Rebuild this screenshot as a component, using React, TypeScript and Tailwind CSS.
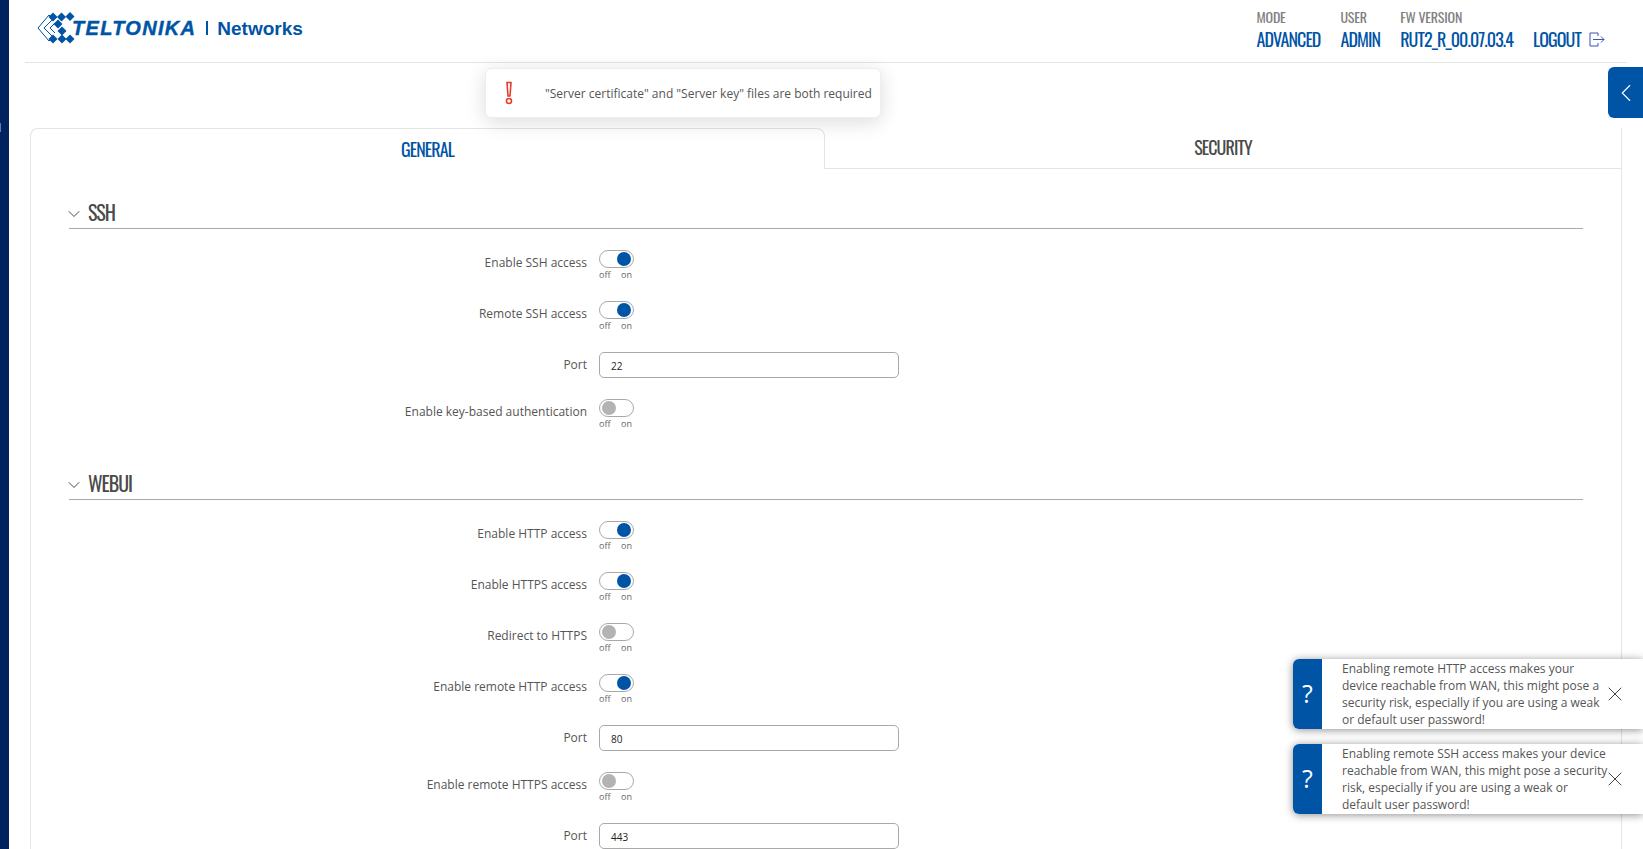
import { X, ChevronDown, ChevronLeft } from 'lucide-react';

const condensed = "font-['Oswald','Liberation_Sans_Narrow','Liberation_Sans',sans-serif]";

function Toggle({ on }: { on?: boolean }) {
  return (
    <div className="w-[35px] h-[30px]">
      <div className="h-[18px] w-[35px] rounded-full border border-[#a9a9a9] bg-white relative">
        <span
          className={
            on
              ? 'absolute right-[2px] top-[1px] size-[14px] rounded-full bg-[#0054a6]'
              : 'absolute left-[2px] top-[1px] size-[14px] rounded-full bg-[#b3b3b3]'
          }
        />
      </div>
      <div className="flex justify-between text-[9px] leading-[13px] text-[#666]">
        <span>off</span>
        <span className="mr-[2px]">on</span>
      </div>
    </div>
  );
}

function Row({ label, on, value }: { label: string; on?: boolean; value?: string }) {
  const isInput = value !== undefined;
  return (
    <div className="flex items-start gap-3 mb-[21px]">
      <div className="w-[518px] text-right text-[12px] leading-[18px] text-[#555] pt-[4px]">{label}</div>
      {isInput ? (
        <div className="w-[300px] h-[26px] rounded-[5px] border border-[#a9a9a9] pl-[11px] text-[10px] leading-[26px] text-[#222]">{value}</div>
      ) : (
        <Toggle on={on} />
      )}
    </div>
  );
}

function Section({ title, children }: { title: string; children: React.ReactNode }) {
  return (
    <section>
      <div className="flex items-center h-[34px] border-b border-[#a9a9a9] text-[#4a4a4a]">
        <ChevronDown size={20} strokeWidth={1.2} className="-ml-[5px] mr-[4px] mt-[5px]" />
        <span className={`${condensed} text-[20px] leading-[30px] tracking-[-1px]`}>{title}</span>
      </div>
      <div className="pt-[21px]">{children}</div>
    </section>
  );
}

function Logo() {
  return (
    <div className="flex items-center">
      <svg width="38" height="32" viewBox="0 0 38 32" className="shrink-0">
        <g fill="none" stroke="#0054a6" strokeWidth="1">
          <path d="M12 3 L1 16 L12 29" />
          <path d="M16 7 L7 16 L16 25" />
          <path d="M12 3 L16 7 M12 29 L16 25" />
          <path d="M18 11 L13 16 L18 21" />
        </g>
        <g fill="#0054a6">
          <path d="M11.500 5 L16 0.500 L20.500 5 L16 9.500Z" />
          <path d="M20 5 L24.500 0.500 L29 5 L24.500 9.500Z" />
          <path d="M28.500 4.500 L33 0 L37.500 4.500 L33 9Z" />
          <path d="M16.500 12 L21 7.500 L25.500 12 L21 16.500Z" />
          <path d="M20.500 19 L25 14.500 L29.500 19 L25 23.500Z" />
          <path d="M11.500 27 L16 22.500 L20.500 27 L16 31.500Z" />
          <path d="M20.500 27 L25 22.500 L29.500 27 L25 31.500Z" />
          <path d="M28.500 27 L33 22.500 L37.500 27 L33 31.500Z" />
        </g>
      </svg>
      <span className="font-['Liberation_Sans',sans-serif] italic font-bold text-[20px] leading-none text-[#0054a6] -ml-[3px] tracking-[1.3px] [-webkit-text-stroke:0.4px_#0054a6]">TELTONIKA</span>
      <span className="w-[2px] h-[14px] bg-[#0054a6] ml-[10px] mr-[9px]" />
      <span className="font-['Liberation_Sans',sans-serif] font-bold text-[19px] leading-none text-[#0054a6]">Networks</span>
    </div>
  );
}

function HeaderItem({ label, value }: { label: string; value: string }) {
  return (
    <div className={`${condensed} flex flex-col`}>
      <span className="text-[14px] leading-[18px] text-[#808080] tracking-[-0.2px]">{label}</span>
      <span className="text-[18px] leading-[26px] text-[#0054a6] tracking-[-0.9px]">{value}</span>
    </div>
  );
}

function Notice({ text, top }: { text: string; top: string }) {
  return (
    <div className={`absolute right-0 ${top} w-[350px] h-[70px] flex bg-white shadow-[0_1px_9px_rgba(0,0,0,0.45)] rounded-l-[6px]`}>
      <div className="w-[29px] shrink-0 bg-[#0054a6] rounded-l-[6px] flex items-center justify-center text-white text-[25px]">?</div>
      <p className="w-[268px] ml-[20px] pt-[1px] text-[12px] leading-[17px] text-[#555] shrink-0">{text}</p>
      <X size={24} strokeWidth={1} className="text-[#444] -ml-[7px] mt-[23px] shrink-0" />
    </div>
  );
}

export default function App() {
  return (
    <div className="relative h-[849px] overflow-hidden bg-white font-['Open_Sans',sans-serif] flex">
      <div className="w-[9px] shrink-0 bg-[#00235f]" />
      <span className="absolute left-0 top-[123px] w-[1px] h-[9px] bg-[#5f7fa8]" />
      <main className="flex-1 min-w-0 pl-[16px] pr-[16px]">
        <header className="h-[63px] border-b border-[#e4e4e4] flex items-start justify-between pl-[12px]">
          <div className="pt-[12px]"><Logo /></div>
          <div className="flex gap-[20px] pt-[8px] pr-[22px]">
            <HeaderItem label="MODE" value="ADVANCED" />
            <HeaderItem label="USER" value="ADMIN" />
            <HeaderItem label="FW VERSION" value="RUT2_R_00.07.03.4" />
            <div className={`${condensed} flex items-center gap-[8px] pt-[18px] text-[18px] tracking-[-0.9px] text-[#0054a6]`}>
              LOGOUT
              <svg width="16" height="15" viewBox="0 0 16 15" fill="none" stroke="#3f51b5" strokeWidth="1">
                <path d="M9 1 H1 V14 H9 M9 1 V4 M9 14 V11 M4 7.500 H15 M12 4.500 L15 7.500 L12 10.500" />
              </svg>
            </div>
          </div>
        </header>

        <div className="pt-[65px] pl-[5px] pr-[5px]">
          <div className="flex h-[41px]">
            <div className={`${condensed} w-[795px] border border-b-0 border-[#e4e4e4] rounded-t-[8px] text-center text-[18px] leading-[40px] tracking-[-0.9px] text-[#0054a6]`}>GENERAL</div>
            <div className={`${condensed} flex-1 border-b border-r border-[#e4e4e4] text-center text-[18px] leading-[39px] tracking-[-0.9px] text-[#4a4a4a]`}>SECURITY</div>
          </div>
          <div className="border-l border-r border-[#e4e4e4] pl-[38px] pr-[38px] pt-[26px]">
            <Section title="SSH">
              <Row label="Enable SSH access" on />
              <Row label="Remote SSH access" on />
              <Row label="Port" value="22" />
              <Row label="Enable key-based authentication" />
            </Section>
            <div className="h-[16px]" />
            <Section title="WEBUI">
              <Row label="Enable HTTP access" on />
              <Row label="Enable HTTPS access" on />
              <Row label="Redirect to HTTPS" />
              <Row label="Enable remote HTTP access" on />
              <Row label="Port" value="80" />
              <Row label="Enable remote HTTPS access" />
              <Row label="Port" value="443" />
            </Section>
          </div>
        </div>
      </main>

      <div className="absolute left-[485px] top-[68px] w-[396px] h-[50px] bg-white rounded-[6px] border border-[#eee] shadow-[0_4px_20px_rgba(0,0,0,0.14)] flex items-center">
        <svg width="10" height="24" viewBox="0 0 10 24" className="ml-[18px] shrink-0" fill="none" stroke="#e53e2e" strokeWidth="1.600">
          <path d="M3 1.500 H7 L6 15 H4 Z" />
          <circle cx="5" cy="20" r="2.500" />
        </svg>
        <span className="ml-[31px] pt-[1px] text-[12px] text-[#555] whitespace-nowrap">"Server certificate" and "Server key" files are both required</span>
      </div>

      <div className="absolute right-0 top-[67px] w-[35px] h-[51px] bg-[#0054a6] rounded-l-[6px] flex items-center justify-center text-white">
        <ChevronLeft size={30} strokeWidth={0.9} />
      </div>

      <Notice top="top-[659px]" text="Enabling remote HTTP access makes your device reachable from WAN, this might pose a security risk, especially if you are using a weak or default user password!" />
      <Notice top="top-[744px]" text="Enabling remote SSH access makes your device reachable from WAN, this might pose a security risk, especially if you are using a weak or default user password!" />
    </div>
  );
}
